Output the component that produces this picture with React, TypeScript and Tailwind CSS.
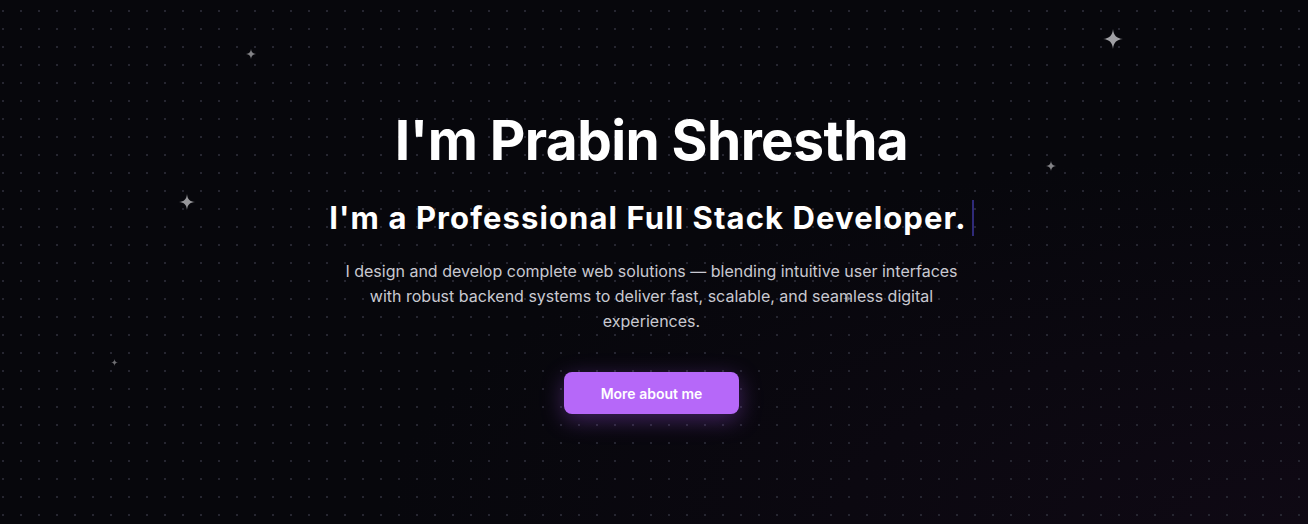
import React from "react";

type Spark = { x: number; y: number; s: number; o: number };

const sparks: Spark[] = [
  { x: 1113, y: 39, s: 20, o: 0.75 },
  { x: 187, y: 202, s: 16, o: 0.7 },
  { x: 251, y: 54, s: 10, o: 0.6 },
  { x: 114, y: 362, s: 7, o: 0.5 },
  { x: 1051, y: 166, s: 10, o: 0.6 },
  { x: 847, y: 298, s: 9, o: 0.5 },
];

function Sparkle({ x, y, s, o }: Spark) {
  return (
    <svg
      className="absolute pointer-events-none"
      style={{ left: x - s / 2, top: y - s / 2, width: s, height: s, opacity: o }}
      viewBox="0 0 20 20"
    >
      <path
        d="M10 0 C10.6 6.5 13.5 9.4 20 10 C13.5 10.6 10.6 13.5 10 20 C9.4 13.5 6.5 10.6 0 10 C6.5 9.4 9.4 6.5 10 0 Z"
        fill="#d4d4d8"
      />
    </svg>
  );
}

export default function App() {
  return (
    <div className="relative w-full h-[524px] overflow-hidden bg-[#07070c]">
      {/* background glow + dot grid */}
      <div className="absolute inset-0 bg-[radial-gradient(ellipse_at_100%_100%,#0f0914_0%,transparent_50%)]" />
      <div className="absolute inset-0 bg-[radial-gradient(circle,#262631_1px,transparent_1.2px)] bg-[length:18px_18px] bg-[position:-6px_2px]" />

      {sparks.map((sp, i) => (
        <Sparkle key={i} {...sp} />
      ))}

      <div className="relative h-full pr-[5px] flex flex-col items-center justify-center text-center font-['Inter',sans-serif]">
        <h1 className="text-[55px] leading-[60px] font-bold text-white tracking-[-0.6px]">
          I'm Prabin Shrestha
        </h1>
        <div className="mt-[28px] flex items-center">
          <h2 className="text-[31px] leading-[40px] font-bold text-white tracking-[1.1px]">
            I'm a Professional Full Stack Developer.
          </h2>
          <span className="ml-[5px] w-[2px] h-[36px] bg-[#2f2a78]" />
        </div>
        <p className="mt-[21px] w-[630px] text-[16px] leading-[25px] text-[#c9c9d1]">
          I design and develop complete web solutions — blending intuitive user interfaces with robust backend systems to deliver fast, scalable, and seamless digital experiences.
        </p>
        <button className="mt-[38px] w-[175px] h-[42px] rounded-lg bg-[#b668f9] text-white text-[14px] font-semibold shadow-[0_6px_22px_rgba(168,85,247,0.35)]">
          More about me
        </button>
      </div>
    </div>
  );
}
